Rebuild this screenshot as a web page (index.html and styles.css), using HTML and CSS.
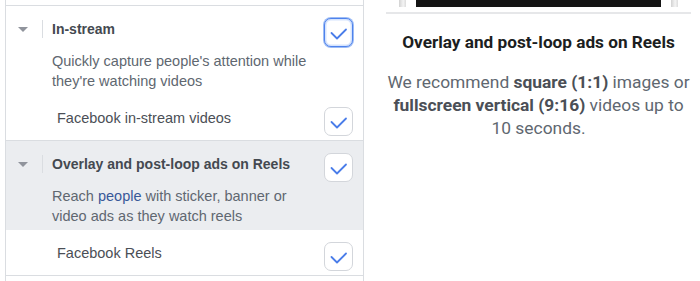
FILE: index.html
```
<!DOCTYPE html>
<html>
<head>
<meta charset="utf-8">
<link rel="stylesheet" href="styles.css">
</head>
<body>
<div class="page">
  <div class="list">
    <div class="prev"></div>
    <div class="group">
      <div class="head">
        <span class="caret"></span>
        <span class="sep"></span>
        <div class="body">
          <div class="title">In-stream</div>
          <div class="desc">Quickly capture people's attention while they're watching videos</div>
        </div>
        <span class="cb focus"><svg viewBox="0 0 29 29" width="29" height="29"><path d="M7.5 15 L13 20.5 L22 11.5" /></svg></span>
      </div>
      <div class="sub">
        <span class="label">Facebook in-stream videos</span>
        <span class="cb"><svg viewBox="0 0 29 29" width="29" height="29"><path d="M7.5 15 L13 20.5 L22 11.5" /></svg></span>
      </div>
    </div>
    <div class="group">
      <div class="head shaded">
        <span class="caret"></span>
        <span class="sep"></span>
        <div class="body">
          <div class="title">Overlay and post-loop ads on Reels</div>
          <div class="desc">Reach <span class="link">people</span> with sticker, banner or video ads as they watch reels</div>
        </div>
        <span class="cb"><svg viewBox="0 0 29 29" width="29" height="29"><path d="M7.5 15 L13 20.5 L22 11.5" /></svg></span>
      </div>
      <div class="sub">
        <span class="label">Facebook Reels</span>
        <span class="cb"><svg viewBox="0 0 29 29" width="29" height="29"><path d="M7.5 15 L13 20.5 L22 11.5" /></svg></span>
      </div>
    </div>
    <div class="rest"></div>
  </div>
  <div class="preview">
    <div class="phone">
      <span class="strip"></span>
      <span class="screen"></span>
      <span class="strip"></span>
    </div>
    <div class="rule"></div>
    <div class="ptitle">Overlay and post-loop ads on Reels</div>
    <p class="ptext">We recommend <b>square (1:1)</b> images or <b>fullscreen vertical (9:16)</b> videos up to 10 seconds.</p>
  </div>
</div>
</body>
</html>
```

FILE: styles.css
```
html, body {
  margin: 0;
  padding: 0;
  background: #ffffff;
}

.page {
  display: flex;
  align-items: flex-start;
  font-family: "Liberation Sans", Arial, sans-serif;
}

.list {
  width: 359px;
  margin-left: 5px;
  box-sizing: border-box;
  border-left: 1px solid #dadde1;
  border-right: 1px solid #dadde1;
}

.prev {
  height: 5px;
}

.group {
  border-top: 1px solid #dadde1;
}

.rest {
  border-top: 1px solid #dadde1;
  height: 10px;
}

.head {
  display: flex;
  align-items: flex-start;
  padding: 13px 10px 4px 12px;
}

.head.shaded {
  background: #ebedf0;
}

.caret {
  width: 0;
  height: 0;
  border-left: 5px solid transparent;
  border-right: 5px solid transparent;
  border-top: 5px solid #90949c;
  margin-top: 8px;
  flex: none;
}

.sep {
  width: 1px;
  height: 18px;
  background: #dadde1;
  margin: 1px 9px 0 14px;
  flex: none;
}

.body {
  width: 264px;
}

.title {
  font-size: 14px;
  font-weight: bold;
  line-height: 20px;
  color: #444950;
}

.desc {
  margin-top: 12px;
  font-size: 14.5px;
  line-height: 20px;
  color: #606770;
}

.link {
  color: #385898;
}

.sub {
  display: flex;
  align-items: flex-start;
  padding: 12px 10px 4px 51px;
}

.label {
  margin-top: 1px;
  font-size: 14.5px;
  line-height: 20px;
  color: #4b4f56;
}

.cb {
  margin-left: auto;
  width: 29px;
  height: 29px;
  box-sizing: border-box;
  border: 1px solid #d3d6db;
  border-radius: 7px;
  background: #ffffff;
  flex: none;
  position: relative;
}

.head .cb {
  margin-top: -1px;
}

.cb svg {
  position: absolute;
  left: -1px;
  top: -1px;
  fill: none;
  stroke: #4a7de9;
  stroke-width: 1.8;
  stroke-linecap: round;
  stroke-linejoin: round;
}

.cb.focus {
  border: 1.5px solid #4e82ec;
  box-shadow: 0 0 0 1px #9dbcf5, inset 0 0 0 1.5px #d6e4fd;
}

.preview {
  margin-left: 22px;
  width: 305px;
  text-align: center;
  font-family: Roboto, "Liberation Sans", sans-serif;
}

.phone {
  display: flex;
  justify-content: center;
  height: 7px;
}

.strip {
  width: 7px;
  background: linear-gradient(to right, #d2d2d2, #f4f4f4 60%, #dcdcdc);
}

.screen {
  width: 245px;
  margin: 0 10px;
  background: #141414;
}

.rule {
  margin-top: 5px;
  height: 2px;
  background: #e6e7e9;
}

.ptitle {
  margin-top: 18px;
  font-size: 17.2px;
  font-weight: bold;
  line-height: 20px;
  color: #1c1e21;
}

.ptext {
  margin: 19px 0 0;
  font-size: 17.4px;
  line-height: 23px;
  color: #606770;
}

.ptext b {
  color: #4b4f56;
}
```
